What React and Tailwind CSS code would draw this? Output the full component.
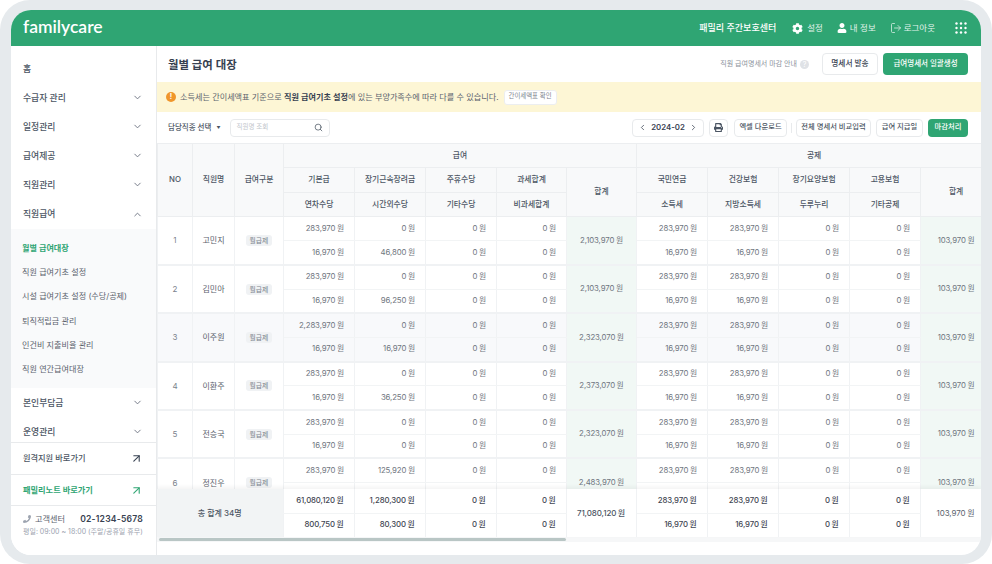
import { ChevronDown, ChevronLeft, ChevronRight, ChevronUp, ArrowUpRight, Search, LogOut } from 'lucide-react'
import { FaCog, FaUser, FaPrint, FaPhoneAlt } from 'react-icons/fa'

const MENU_TOP = ['수급자 관리', '일정관리', '급여제공', '직원관리']
const SUB_MENU = ['직원 급여기초 설정', '시설 급여기초 설정 (수당/공제)', '퇴직적립금 관리', '인건비 지출비율 관리', '직원 연간급여대장']

const COLS = [35, 42, 49, 71, 71, 71, 70, 70, 71, 71, 71, 71, 71]

const ROWS = [
  { no: 1, name: '고민지', base: '283,970', long: '0', over: '46,800', total: '2,103,970' },
  { no: 2, name: '김민아', base: '283,970', long: '0', over: '96,250', total: '2,103,970' },
  { no: 3, name: '이주원', base: '2,283,970', long: '0', over: '16,970', total: '2,323,070', hover: true },
  { no: 4, name: '이환주', base: '283,970', long: '0', over: '36,250', total: '2,373,070' },
  { no: 5, name: '전승국', base: '283,970', long: '0', over: '0', total: '2,323,070' },
  // 두번째 줄은 총 합계 아래로 가려짐
  { no: 6, name: '정진우', base: '283,970', long: '125,920', over: '0', total: '2,483,970', clipped: true },
]

function Colgroup() {
  return (
    <colgroup>
      {COLS.map((w, i) => (
        <col key={i} style={{ width: w }} />
      ))}
    </colgroup>
  )
}

function Btn({ children, className = '' }) {
  return (
    <button className={`h-[18px] rounded-[4px] border border-[#e8eaec] bg-white text-[7.3px] font-medium text-[#4b5563] whitespace-nowrap ${className}`}>
      {children}
    </button>
  )
}

function Th({ children, ...props }) {
  return (
    <th {...props} className="border border-[#eceef0] bg-[#f8f9fa] text-[7.8px] font-medium text-[#4b5563] text-center p-0">
      {children}
    </th>
  )
}

function Money({ value, thick, strong, hidden }) {
  return (
    <td
      className={`pr-[10px] text-right text-[7.8px] tracking-[-0.1px] [word-spacing:-0.5px] border-x border-[#f0f2f4] ${thick ? 'border-b-2 border-b-[#f0f2f4]' : 'border-b border-b-[#f2f4f5]'} ${
        strong ? 'font-medium text-[#3f4652]' : 'text-[#6f7680]'
      }`}
    >
      {hidden ? '' : `${value} 원`}
    </td>
  )
}

function Row({ row }) {
  const bg = row.hover ? 'bg-[#f8f9fb]' : 'bg-white'
  const side = 'text-center border-x border-b-2 border-[#f0f2f4]'
  const total = 'bg-[#f1f8f5] text-center text-[7.8px] tracking-[-0.1px] [word-spacing:-0.5px] text-[#6f7680] border-x border-b-2 border-[#f0f2f4]'
  return (
    <>
      <tr className={`h-[24.2px] ${bg}`}>
        <td rowSpan={2} className={`${side} text-[8px] text-[#7b828c]`}>{row.no}</td>
        <td rowSpan={2} className={`${side} text-[8px] text-[#5b626d]`}>{row.name}</td>
        <td rowSpan={2} className={side}>
          <span className="block w-fit mx-auto rounded-[3px] bg-[#f0f2f4] px-[4px] text-[6.8px] leading-[11px] text-[#7b828c]">월급제</span>
        </td>
        <Money value={row.base} />
        <Money value={row.long} />
        <Money value="0" />
        <Money value="0" />
        <td rowSpan={2} className={total}>{row.total} 원</td>
        <Money value="283,970" />
        <Money value="283,970" />
        <Money value="0" />
        <Money value="0" />
        <td rowSpan={2} className={total}>103,970 원</td>
      </tr>
      <tr className={`h-[24.2px] ${bg}`}>
        <Money value="16,970" thick hidden={row.clipped} />
        <Money value={row.over} thick hidden={row.clipped} />
        <Money value="0" thick hidden={row.clipped} />
        <Money value="0" thick hidden={row.clipped} />
        <Money value="16,970" thick hidden={row.clipped} />
        <Money value="16,970" thick hidden={row.clipped} />
        <Money value="0" thick hidden={row.clipped} />
        <Money value="0" thick hidden={row.clipped} />
      </tr>
    </>
  )
}

function Sidebar() {
  const item = 'h-[29px] shrink-0 flex items-center justify-between pl-[12px] pr-[13px] text-[8.8px] font-medium text-[#4b5563]'
  return (
    <aside className="w-[146px] shrink-0 flex flex-col border-r border-[#e8eaec] bg-white">
      <nav className="h-[396px] shrink-0 overflow-hidden flex flex-col pt-[8px]">
        <div className={item}>홈</div>
        {MENU_TOP.map((m) => (
          <div key={m} className={item}>
            {m}
            <ChevronDown className="w-[11px] h-[11px] text-[#6b7280]" />
          </div>
        ))}
        <div className={`${item} h-[30px]`}>
          직원급여
          <ChevronUp className="w-[11px] h-[11px] text-[#6b7280]" />
        </div>
        <div className="h-[159px] shrink-0 bg-[#f9fafb] pt-[7px] pl-[11px] flex flex-col text-[8.1px] text-[#5b626d]">
          <div className="h-[24.2px] flex items-center font-semibold text-[#2fa573]">월별 급여대장</div>
          {SUB_MENU.map((m) => (
            <div key={m} className="h-[24.2px] flex items-center">{m}</div>
          ))}
        </div>
        <div className={item}>
          본인부담금
          <ChevronDown className="w-[11px] h-[11px] text-[#6b7280]" />
        </div>
        <div className={item}>
          운영관리
          <ChevronDown className="w-[11px] h-[11px] text-[#6b7280]" />
        </div>
      </nav>
      <div className="h-[32px] shrink-0 flex items-center justify-between pl-[12px] pr-[13px] border-t border-[#e8eaec] text-[8.2px] font-medium text-[#4b5563]">
        원격지원 바로가기
        <ArrowUpRight className="w-[13px] h-[13px] text-[#374151]" />
      </div>
      <div className="h-[31px] shrink-0 flex items-center justify-between pl-[12px] pr-[13px] border-t border-[#e8eaec] text-[8.2px] font-semibold text-[#2fa573]">
        패밀리노트 바로가기
        <ArrowUpRight className="w-[13px] h-[13px]" />
      </div>
      <div className="flex-1 border-t border-[#e8eaec] pl-[12px] pr-[13px] pt-[7px]">
        <div className="flex items-center justify-between">
          <span className="flex items-center gap-[4px] text-[8.2px] text-[#5b626d]">
            <FaPhoneAlt className="w-[8px] h-[8px] text-[#9ca3af] -scale-x-100" />
            고객센터
          </span>
          <span className="text-[8.6px] font-semibold tracking-[0.2px] text-[#374151]">02-1234-5678</span>
        </div>
        <p className="mt-[1px] text-[7px] text-[#9ca3af] whitespace-nowrap">평일: 09:00 ~ 18:00 (주말/공휴일 휴무)</p>
      </div>
    </aside>
  )
}

function Dots() {
  return (
    <svg width="12" height="12" viewBox="0 0 12 12" fill="white">
      {[1.5, 6, 10.5].map((y) =>
        [1.5, 6, 10.5].map((x) => <circle key={`${x}-${y}`} cx={x} cy={y} r="1.2" />)
      )}
    </svg>
  )
}

export default function App() {
  return (
    <div className="w-[992px] h-[564px] bg-white font-[Inter,'Noto_Sans_CJK_KR',sans-serif]">
      <div className="h-full rounded-[30px] bg-[#e6eaed] pl-[11px] pr-[11px] pt-[10px] pb-[9px]">
        <div className="h-full rounded-[20px] overflow-hidden bg-white flex flex-col">
          {/* 상단 헤더 */}
          <header className="h-[36px] shrink-0 bg-[#2fa573] flex items-center justify-between pl-[12px] pr-[14px] text-white">
            <span className="text-[17.5px] leading-none font-semibold font-['Lato',sans-serif] -mt-[3px]">familycare</span>
            <div className="flex items-center">
              <span className="text-[9px] font-medium mr-[16px]">패밀리 주간보호센터</span>
              <span className="flex items-center gap-[4px] text-[8.5px] text-[#e3f3ec] mr-[14px]">
                <FaCog className="w-[11px] h-[11px] text-white" />
                설정
              </span>
              <span className="flex items-center gap-[3px] text-[8.5px] text-[#e3f3ec] mr-[14px]">
                <FaUser className="w-[10px] h-[10px] text-white" />
                내 정보
              </span>
              <span className="flex items-center gap-[2px] text-[8.5px] text-[#e3f3ec] mr-[20px]">
                <LogOut className="w-[12px] h-[12px]" strokeWidth={1.5} />
                로그아웃
              </span>
              <Dots />
            </div>
          </header>

          <div className="flex-1 min-h-0 flex">
            <Sidebar />

            <main className="flex-1 min-w-0 flex flex-col">
              {/* 타이틀 */}
              <div className="h-[36px] shrink-0 flex items-center justify-between pl-[11px] pr-[13px]">
                <h1 className="mt-[4px] text-[11.4px] font-semibold text-[#374151]">월별 급여 대장</h1>
                <div className="flex items-center">
                  <span className="text-[7px] text-[#8b929c]">직원 급여명세서 마감 안내</span>
                  <span className="ml-[3px] w-[9px] h-[9px] rounded-full bg-[#dfe2e6] text-white text-[7px] leading-[9px] text-center">?</span>
                  <button className="ml-[13px] h-[22px] w-[56px] rounded-[4px] border border-[#e8eaec] bg-white text-[7.7px] font-medium text-[#374151]">명세서 발송</button>
                  <button className="ml-[5px] h-[22px] w-[85px] rounded-[4px] bg-[#2fa573] text-[7.5px] font-medium text-white">급여명세서 일괄생성</button>
                </div>
              </div>

              {/* 안내 배너 */}
              <div className="h-[30px] shrink-0 bg-[#fdf6d5] flex items-center pl-[9px] text-[8.15px] text-[#5b626d]">
                <span className="w-[10px] h-[10px] rounded-full bg-[#f0962b] text-white text-[7px] leading-[10px] font-bold text-center">!</span>
                <span className="ml-[4px]">
                  소득세는 간이세액표 기준으로 <b className="font-semibold text-[#374151]">직원 급여기초 설정</b>에 있는 부양가족수에 따라 다를 수 있습니다.
                </span>
                <button className="ml-[5px] h-[15px] w-[53px] rounded-[3px] border border-[#eceef0] bg-white text-[6.4px] text-[#7b828c] whitespace-nowrap">간이세액표 확인</button>
              </div>

              {/* 툴바 */}
              <div className="h-[31px] shrink-0 flex items-center justify-between pl-[11px] pr-[13px]">
                <div className="flex items-center">
                  <span className="text-[7.5px] font-medium text-[#4b5563]">담당직종 선택</span>
                  <span className="ml-[5px] text-[4px] text-[#4b5563]">▼</span>
                  <div className="ml-[10px] w-[100px] h-[18px] rounded-[4px] border border-[#e8eaec] flex items-center justify-between pl-[5px] pr-[6px]">
                    <span className="text-[6.5px] text-[#c2c6cc]">직원명 조회</span>
                    <Search className="w-[9px] h-[9px] text-[#4b5563]" />
                  </div>
                </div>
                <div className="flex items-center">
                  <div className="w-[72px] h-[18px] rounded-[4px] border border-[#e8eaec] flex items-center justify-between px-[5px]">
                    <ChevronLeft className="w-[9px] h-[9px] text-[#374151]" />
                    <span className="text-[7.8px] font-semibold text-[#374151]">2024-02</span>
                    <ChevronRight className="w-[9px] h-[9px] text-[#374151]" />
                  </div>
                  <button className="ml-[5px] w-[19px] h-[18px] rounded-[4px] border border-[#e8eaec] flex items-center justify-center">
                    <FaPrint className="w-[9px] h-[9px] text-[#4b5563]" />
                  </button>
                  <Btn className="ml-[6px] w-[53px]">엑셀 다운로드</Btn>
                  <span className="mx-[4px] w-px h-[10px] bg-[#e8eaec]" />
                  <Btn className="w-[75px]">전체 명세서 비교입력</Btn>
                  <Btn className="ml-[5px] w-[47px]">급여 지급일</Btn>
                  <button className="ml-[5px] w-[40px] h-[18px] rounded-[4px] bg-[#2fa573] text-[7.3px] font-medium text-white">마감처리</button>
                </div>
              </div>

              {/* 급여 테이블 */}
              <div className="flex-1 min-h-0 overflow-hidden flex flex-col">
                <div className="h-[346px] shrink-0 overflow-hidden">
                  <table className="w-[834px] table-fixed border-collapse">
                    <Colgroup />
                    <thead>
                      <tr className="h-[24px]">
                        <Th rowSpan={3}>NO</Th>
                        <Th rowSpan={3}>직원명</Th>
                        <Th rowSpan={3}>급여구분</Th>
                        <Th colSpan={5}>급여</Th>
                        <Th colSpan={5}>공제</Th>
                      </tr>
                      <tr className="h-[25px]">
                        <Th>기본급</Th>
                        <Th>장기근속장려금</Th>
                        <Th>주휴수당</Th>
                        <Th>과세합계</Th>
                        <Th rowSpan={2}>합계</Th>
                        <Th>국민연금</Th>
                        <Th>건강보험</Th>
                        <Th>장기요양보험</Th>
                        <Th>고용보험</Th>
                        <Th rowSpan={2}>합계</Th>
                      </tr>
                      <tr className="h-[24px]">
                        <Th>연차수당</Th>
                        <Th>시간외수당</Th>
                        <Th>기타수당</Th>
                        <Th>비과세합계</Th>
                        <Th>소득세</Th>
                        <Th>지방소득세</Th>
                        <Th>두루누리</Th>
                        <Th>기타공제</Th>
                      </tr>
                    </thead>
                    <tbody>
                      {ROWS.map((row) => (
                        <Row key={row.no} row={row} />
                      ))}
                    </tbody>
                  </table>
                </div>

                {/* 총 합계 */}
                <div className="relative shrink-0 h-[48px] overflow-hidden shadow-[0_-2px_4px_rgba(0,0,0,0.05)]">
                  <table className="w-[834px] table-fixed border-collapse">
                    <Colgroup />
                    <tbody>
                      <tr className="h-[24px]">
                        <td colSpan={3} rowSpan={2} className="bg-[#f2f4f5] text-center text-[8px] font-medium text-[#4b5563]">총 합계 34명</td>
                        <Money value="61,080,120" strong />
                        <Money value="1,280,300" strong />
                        <Money value="0" strong />
                        <Money value="0" strong />
                        <td rowSpan={2} className="text-center text-[8px] tracking-[-0.1px] [word-spacing:-0.5px] font-medium text-[#4b5563] border-x border-[#f0f2f4]">71,080,120 원</td>
                        <Money value="283,970" strong />
                        <Money value="283,970" strong />
                        <Money value="0" strong />
                        <Money value="0" strong />
                        <td rowSpan={2} className="text-center text-[8px] tracking-[-0.1px] [word-spacing:-0.5px] text-[#5b626d] border-x border-[#f0f2f4]">103,970 원</td>
                      </tr>
                      <tr className="h-[24px]">
                        <Money value="800,750" strong />
                        <Money value="80,300" strong />
                        <Money value="0" strong />
                        <Money value="0" strong />
                        <Money value="16,970" strong />
                        <Money value="16,970" strong />
                        <Money value="0" strong />
                        <Money value="0" strong />
                      </tr>
                    </tbody>
                  </table>
                </div>

                {/* 가로 스크롤바 */}
                <div className="shrink-0 h-[5px] bg-[#f6f7f8] px-[2px] py-[1px]">
                  <div className="h-full w-[407px] rounded-full bg-[#b9c6c5]" />
                </div>
              </div>
            </main>
          </div>
        </div>
      </div>
    </div>
  )
}
